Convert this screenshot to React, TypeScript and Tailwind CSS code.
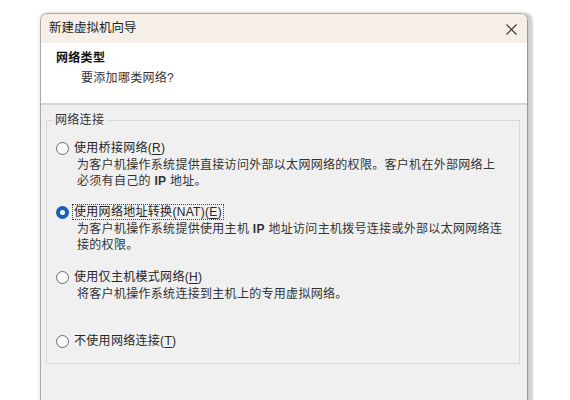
import React from "react";

const font = { fontFamily: '"Liberation Sans", "Noto Sans CJK SC", sans-serif' };

function Radio({ checked }: { checked?: boolean }) {
  if (checked) {
    return (
      <span className="w-[13px] h-[13px] rounded-full bg-[#1a5fb4] flex items-center justify-center shrink-0">
        <span className="w-[5px] h-[5px] rounded-full bg-white" />
      </span>
    );
  }
  return <span className="w-[13px] h-[13px] rounded-full border border-[#6b6b6b] bg-[#fafafa] shrink-0" />;
}

function Option({
  checked,
  label,
  mnemonic,
  desc,
  h,
}: {
  checked?: boolean;
  label: React.ReactNode;
  mnemonic: string;
  desc?: React.ReactNode[];
  h: string;
}) {
  return (
    <div className={h}>
      <div className="flex items-center h-[16px]">
        <Radio checked={checked} />
        <span
          className={
            "ml-[3px] px-[1px] leading-[14px] text-[#262626] " +
            (checked ? "border border-dotted border-[#444]" : "border border-transparent")
          }
        >
          {label}
          <span className="font-medium">
            (<span className="underline underline-offset-2 decoration-1">{mnemonic}</span>)
          </span>
        </span>
      </div>
      {desc && (
        <div className="ml-[21px] mt-[1px] leading-[16px]">
          {desc.map((d, i) => (
            <div key={i}>{d}</div>
          ))}
        </div>
      )}
    </div>
  );
}

export default function App() {
  return (
    <div className="w-[570px] h-[400px] bg-white overflow-hidden pt-[13px] pl-[40px]" style={font}>
      <div className="w-[488px] h-[400px] rounded-t-[7px] border border-[#a9a9a9] border-r-[#9a9a9a] shadow-[0_0_5px_rgba(0,0,0,0.12),5px_0_2px_rgba(0,0,0,0.16)] overflow-hidden text-[12px] tracking-[0.3px] text-[#333]">
        {/* title bar */}
        <div className="h-[29px] bg-[#f5efe7] flex items-center justify-between pl-[8px] pr-[10px]">
          <span className="text-[12.5px] tracking-[0px] text-[#222]">新建虚拟机向导</span>
          <svg width="11" height="11" viewBox="0 0 11 11" className="mt-[1px]">
            <path d="M0.5 0.5 L10.5 10.5 M10.5 0.5 L0.5 10.5" stroke="#333" strokeWidth="1.1" />
          </svg>
        </div>
        {/* header */}
        <div className="h-[62px] bg-white border-b-2 border-[#d4d4d4] pt-[7px] leading-[16px]">
          <div className="pl-[15px] font-bold text-[#111]">网络类型</div>
          <div className="pl-[40px] mt-[4px] text-[#333]">要添加哪类网络?</div>
        </div>
        {/* body */}
        <div className="bg-[#f0f0f0] h-[300px] pl-[5px] pr-[7px] pt-[7px]">
          <fieldset className="border border-[#d9d9d9] pl-[9px] pb-[14px] min-w-0">
            <legend className="ml-[-3px] px-[2px] leading-[16px] text-[#333]">网络连接</legend>
            <div className="mt-[12px]">
              <Option
                h="h-[64px]"
                label="使用桥接网络"
                mnemonic="R"
                desc={[
                  "为客户机操作系统提供直接访问外部以太网网络的权限。客户机在外部网络上",
                  <>必须有自己的 <b className="font-semibold">IP</b> 地址。</>,
                ]}
              />
              <Option
                h="h-[65px]"
                checked
                label={<>使用网络地址转换<span className="font-medium">(NAT)</span></>}
                mnemonic="E"
                desc={[
                  <>为客户机操作系统提供使用主机 <b className="font-semibold">IP</b> 地址访问主机拨号连接或外部以太网网络连</>,
                  "接的权限。",
                ]}
              />
              <Option
                h="h-[64px]"
                label="使用仅主机模式网络"
                mnemonic="H"
                desc={["将客户机操作系统连接到主机上的专用虚拟网络。"]}
              />
              <Option h="h-[16px]" label="不使用网络连接" mnemonic="T" />
            </div>
          </fieldset>
        </div>
      </div>
    </div>
  );
}
